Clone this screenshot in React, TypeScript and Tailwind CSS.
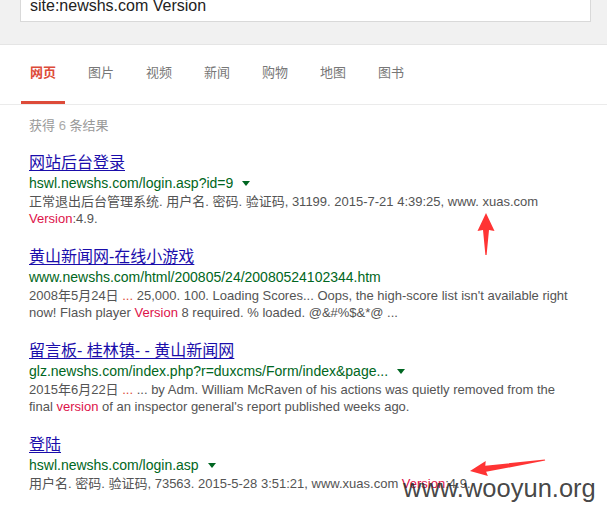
import React from "react";

type Result = {
  title: string;
  url: string;
  caret: boolean;
  lines: React.ReactNode[];
};

const Em = ({ children }: { children: React.ReactNode }) => (
  <span className="text-[#dd1148]">{children}</span>
);

const Dots = () => <span className="text-[#dd4b39]">...</span>;

const results: Result[] = [
  {
    title: "网站后台登录",
    url: "hswl.newshs.com/login.asp?id=9",
    caret: true,
    lines: [
      <>正常退出后台管理系统. 用户名. 密码. 验证码, 31199. 2015-7-21 4:39:25, www. xuas.com</>,
      <>
        <Em>Version</Em>:4.9.
      </>,
    ],
  },
  {
    title: "黄山新闻网-在线小游戏",
    url: "www.newshs.com/html/200805/24/20080524102344.htm",
    caret: false,
    lines: [
      <>
        2008年5月24日 <Dots /> 25,000. 100. Loading Scores... Oops, the high-score list isn't available right
      </>,
      <>
        now! Flash player <Em>Version</Em> 8 required. % loaded. @&amp;#%$&amp;*@ ...
      </>,
    ],
  },
  {
    title: "留言板- 桂林镇- - 黄山新闻网",
    url: "glz.newshs.com/index.php?r=duxcms/Form/index&page...",
    caret: true,
    lines: [
      <>
        2015年6月22日 <Dots /> ... by Adm. William McRaven of his actions was quietly removed from the
      </>,
      <>
        final <Em>version</Em> of an inspector general's report published weeks ago.
      </>,
    ],
  },
  {
    title: "登陆",
    url: "hswl.newshs.com/login.asp",
    caret: true,
    lines: [
      <>
        用户名. 密码. 验证码, 73563. 2015-5-28 3:51:21, www.xuas.com <Em>Version</Em>:4.9.
      </>,
    ],
  },
];

const tabs = ["网页", "图片", "视频", "新闻", "购物", "地图", "图书"];

export default function App() {
  return (
    <div className="relative w-[607px] h-[517px] overflow-hidden bg-white [font-family:'Liberation_Sans',Arial,'Noto_Sans_CJK_SC',sans-serif]">
      {/* search header */}
      <div className="flex h-[45px] border-b border-[#e5e5e5] bg-[#f1f1f1]">
        <div className="ml-[20px] flex h-[22px] w-[571px] flex-col overflow-hidden border border-t-0 border-[#d9d9d9] bg-white">
          <div className="-mt-[3px] pl-[9px] text-[16px] leading-[18px] text-[#222] whitespace-nowrap">
            site:newshs.com Version
          </div>
        </div>
      </div>

      {/* tabs */}
      <div className="flex gap-[14px] border-b border-[#ebebeb] pl-[21px]">
        {tabs.map((t, i) => (
          <div
            key={t}
            className={`h-[59px] w-[44px] pt-[19px] text-center text-[13px] leading-[18px] border-b-[3px] ${
              i === 0
                ? "border-[#dd4b39] font-bold text-[#dd4b39]"
                : "border-transparent text-[#777]"
            }`}
          >
            {t}
          </div>
        ))}
      </div>

      {/* results */}
      <div className="flex flex-col pl-[29px] pt-[12px]">
        <div className="text-[13px] leading-[18px] text-[#999]">
          获得 <span className="text-[#aaa]">6</span> 条结果
        </div>
        <div className="mt-[18px] flex flex-col gap-[20px]">
          {results.map((r) => (
            <div key={r.title} className="flex flex-col">
              <div className="text-[16px] leading-[20px] text-[#1a0dab] underline underline-offset-[2px]">
                {r.title}
              </div>
              <div className="flex items-center text-[14px] leading-[20px] text-[#006621] whitespace-nowrap">
                {r.url}
                {r.caret && (
                  <span className="ml-[9px] inline-block h-0 w-0 border-x-[4px] border-x-transparent border-t-[5px] border-t-[#006621]" />
                )}
              </div>
              {r.lines.map((l, i) => (
                <div
                  key={i}
                  className="text-[13px] leading-[17px] text-[#545454] whitespace-nowrap"
                >
                  {l}
                </div>
              ))}
            </div>
          ))}
        </div>
      </div>

      {/* annotation arrows */}
      <svg
        className="absolute left-0 top-0 pointer-events-none"
        width="607"
        height="517"
        viewBox="0 0 607 517"
      >
        <polygon
          points="486,213 494.5,231 489,230 486.6,255 485.4,255 483,230 477.5,231"
          fill="#ff3434"
        />
        <polygon
          points="470,471 487.9,476 486.1,471.8 545.2,460.6 544.8,459.4 485.3,465.8 485.7,461.1"
          fill="#ff3434"
        />
      </svg>

      {/* watermark */}
      <div className="absolute left-[403px] top-[475px] text-[25.5px] leading-[26px] text-[#2f2f2f]/90 whitespace-nowrap">
        www.wooyun.org
      </div>
    </div>
  );
}
